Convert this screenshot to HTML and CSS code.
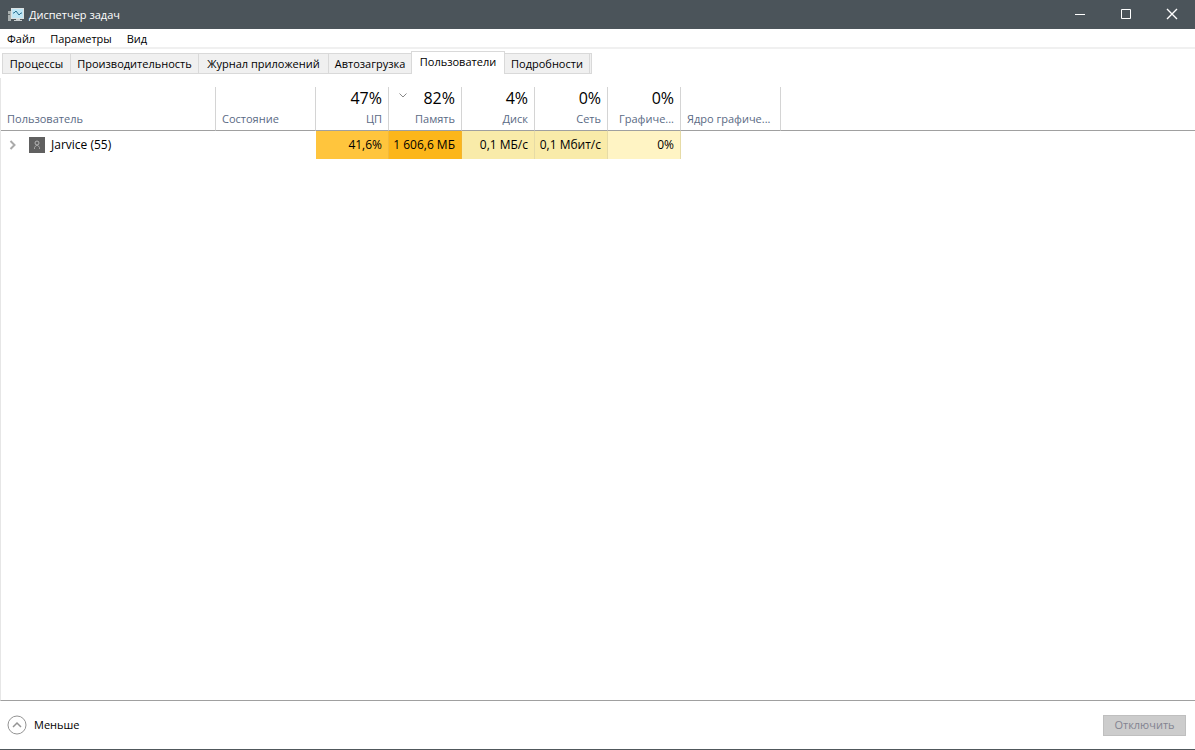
FILE: index.html
```html
<!DOCTYPE html>
<html lang="ru">
<head>
<meta charset="utf-8">
<title>Диспетчер задач</title>
<link rel="stylesheet" href="styles.css">
</head>
<body>
<div class="window">
  <header class="titlebar">
    <svg class="app-icon" width="16" height="16" viewBox="0 0 16 16" aria-hidden="true">
      <rect x="0" y="4" width="3" height="10" fill="#a9b0b0"/>
      <rect x="0" y="7" width="2" height="1" fill="#5c6666"/>
      <rect x="3.500" y="1.500" width="12" height="10" fill="#bfe6f5" stroke="#dce1e2"/>
      <path d="M5 6h1l2-2 3 4 2-2h1" fill="none" stroke="#286f91"/>
      <path d="M8 12h4v1h2v1H6v-1h2z" fill="#c8cecf"/>
    </svg>
    <h1 class="title">Диспетчер задач</h1>
    <div class="caption-buttons">
      <button class="caption-button" aria-label="Свернуть"><svg width="12" height="12" viewBox="0 0 12 12"><path d="M1 6.500h10" /></svg></button>
      <button class="caption-button" aria-label="Развернуть"><svg width="12" height="12" viewBox="0 0 12 12"><path d="M1.500 1.500h9v9h-9z"/></svg></button>
      <button class="caption-button" aria-label="Закрыть"><svg width="12" height="12" viewBox="0 0 12 12"><path d="M1 1l10 10M11 1L1 11" stroke-width="1.400"/></svg></button>
    </div>
  </header>
  <nav class="menubar">
    <button class="menu-item">Файл</button>
    <button class="menu-item">Параметры</button>
    <button class="menu-item">Вид</button>
  </nav>
  <div class="tabs" role="tablist">
    <button class="tab" role="tab">Процессы</button>
    <button class="tab" role="tab">Производительность</button>
    <button class="tab" role="tab">Журнал приложений</button>
    <button class="tab" role="tab">Автозагрузка</button>
    <button class="tab tab-selected" role="tab" aria-selected="true">Пользователи</button>
    <button class="tab" role="tab">Подробности</button>
    <span class="tabs-end"></span>
  </div>
  <main class="pane">
    <table class="users">
      <colgroup>
        <col class="col-user"><col class="col-wide"><col class="col-metric"><col class="col-metric"><col class="col-metric"><col class="col-metric"><col class="col-metric"><col class="col-wide"><col>
      </colgroup>
      <thead>
        <tr>
          <th class="label-left">Пользователь</th>
          <th class="label-left">Состояние</th>
          <th><span class="total">47%</span>ЦП</th>
          <th><svg class="sort-mark" width="8" height="5" viewBox="0 0 8 5" aria-hidden="true"><path d="M.5.5L4 4 7.500.5"/></svg><span class="total">82%</span>Память</th>
          <th><span class="total">4%</span>Диск</th>
          <th><span class="total">0%</span>Сеть</th>
          <th><span class="total">0%</span>Графиче...</th>
          <th class="label-left">Ядро графиче...</th>
          <td class="filler"></td>
        </tr>
      </thead>
      <tbody>
        <tr>
          <td class="user-cell">
            <div class="user">
              <button class="expander" aria-label="Развернуть Jarvice"><svg width="8" height="10" viewBox="0 0 8 10"><path d="M1.500 1L5.500 5l-4 4"/></svg></button>
              <svg class="avatar" width="16" height="16" viewBox="0 0 16 16" aria-hidden="true"><rect width="16" height="16" fill="#606060"/><circle cx="8" cy="6" r="2" fill="none" stroke="#b4b4b4"/><path d="M5.500 12V10.500L7 8.500h2l1.500 2V12" fill="none" stroke="#a4a4a4"/></svg>
              <span>Jarvice (55)</span>
            </div>
          </td>
          <td></td>
          <td class="heat heat-high">41,6%</td>
          <td class="heat heat-top">1 606,6 МБ</td>
          <td class="heat heat-low">0,1 МБ/с</td>
          <td class="heat heat-low">0,1 Мбит/с</td>
          <td class="heat heat-none">0%</td>
          <td></td>
          <td></td>
        </tr>
      </tbody>
    </table>
  </main>
  <footer class="footer">
    <button class="less"><svg width="20" height="20" viewBox="0 0 20 20" aria-hidden="true"><circle cx="10" cy="10" r="9" /><path d="M6 12l4-4 4 4" stroke-width="1.500"/></svg>Меньше</button>
    <button class="disconnect" disabled>Отключить</button>
  </footer>
</div>
</body>
</html>
```
FILE: styles.css
```css
* { box-sizing: border-box; }

body {
  margin: 0;
  background: #fff;
  color: #000;
  font: 12px/16px "Open Sans", "Noto Sans", sans-serif;
}

button {
  margin: 0;
  padding: 0;
  border: 0;
  background: none;
  color: inherit;
  font: inherit;
}

svg { display: block; flex: none; }

.window {
  display: flex;
  flex-direction: column;
  min-height: 100vh;
  border-bottom: 1px solid #50585c;
}

.titlebar {
  display: flex;
  align-items: center;
  height: 29px;
  padding-left: 8px;
  background: #4b545a;
  color: #fff;
}

.title {
  flex: 1;
  margin: 0 0 0 5px;
  font-size: 11px;
  font-weight: 400;
}

.caption-buttons { display: flex; align-self: stretch; }

.caption-button {
  display: flex;
  align-items: center;
  justify-content: center;
  width: 46px;
  padding-bottom: 2px;
}

.caption-button path { fill: none; stroke: #fff; }

.menubar {
  display: flex;
  gap: 15px;
  height: 20px;
  padding: 0 7px;
  border-bottom: 2px solid #f0f0f0;
  font-size: 11px;
}

.menu-item { padding-top: 1px; }

.tabs {
  display: grid;
  grid-template-columns: 68px 128px 130px 83px 94px 84px 3px;
  align-items: end;
  height: 25px;
  padding-left: 2px;
  font-size: 11px;
}

.tab {
  height: 21px;
  border: 1px solid #d9d9d9;
  border-right: 0;
  background: #f0f0f0;
  white-space: nowrap;
}

.tab-selected {
  height: 23px;
  padding-bottom: 2px;
  border-right: 1px solid #d9d9d9;
  border-bottom: 0;
  background: #fff;
}

.tab-selected + .tab { border-left: 0; }

.tabs-end {
  height: 21px;
  border: 1px solid #d9d9d9;
  background: #f0f0f0;
}

.pane {
  flex: 1;
  margin-top: 4px;
  padding-top: 9px;
  border-left: 1px solid #e6e6e6;
  border-bottom: 1px solid #a0a0a0;
}

.users {
  width: 100%;
  table-layout: fixed;
  border-collapse: separate;
  border-spacing: 0;
}

.col-user { width: 215px; }
.col-wide { width: 100px; }
.col-metric { width: 73px; }

.users th {
  position: relative;
  height: 44px;
  padding: 0 6px 3px;
  border-right: 1px solid #d4d4d4;
  border-bottom: 1px solid #a0a0a0;
  color: #5a6a84;
  font-size: 11px;
  font-weight: 400;
  text-align: right;
  vertical-align: bottom;
  white-space: nowrap;
}

.users .label-left { text-align: left; }

.filler { border-bottom: 1px solid #a0a0a0; }

.total {
  display: block;
  padding-bottom: 3px;
  color: #000;
  font-size: 16px;
  line-height: 20px;
}

.sort-mark { position: absolute; top: 6px; left: 10px; }
.sort-mark path { fill: none; stroke: #888; }

.users tbody td { height: 28px; padding: 0; }

.user { display: flex; align-items: center; padding-left: 8px; }
.expander path { fill: none; stroke: #aaa; stroke-width: 2; }
.avatar { margin: 0 6px 0 12px; }

.users tbody .heat {
  padding-right: 6px;
  border-right: 1px solid #e6dba6;
  text-align: right;
  white-space: nowrap;
}

.users tbody .heat-high { border-color: #f2b93c; background: #ffc53d; }
.users tbody .heat-top { border-color: #f3b52d; background: #fcb61a; }
.heat-low { background: #f9eba9; }
.heat-none { background: #fff4c4; }

.footer {
  display: flex;
  align-items: center;
  justify-content: space-between;
  height: 48px;
  padding: 0 9px 0 7px;
  font-size: 11px;
}

.less { display: flex; align-items: center; gap: 7px; }
.less svg { fill: none; stroke: #949494; }

.disconnect {
  width: 83px;
  height: 21px;
  border: 1px solid #bfbfbf;
  background: #ccc;
  color: #838391;
}
```
